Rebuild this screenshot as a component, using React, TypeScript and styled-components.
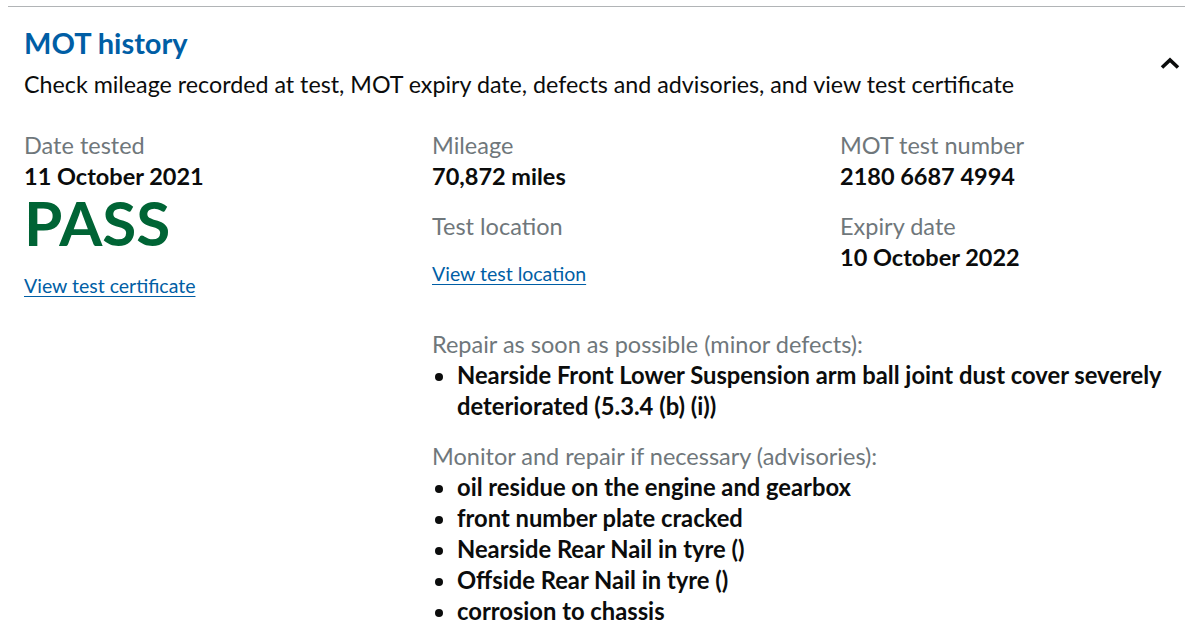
import React from 'react'
import styled, { createGlobalStyle } from 'styled-components'

const FONT = `Lato, "Noto Sans", Arial, sans-serif`

const GlobalStyle = createGlobalStyle`
  body {
    margin: 0;
    background: #ffffff;
    font-family: ${FONT};
    color: #0b0c0c;
    overflow: hidden;
  }
`

const Page = styled.div`
  padding: 6px 0 0 8px;
`

const Section = styled.section`
  border-top: 1px solid #b1b4b6;
  padding: 0 5px 0 16px;
`

const Header = styled.div`
  display: flex;
  align-items: center;
  justify-content: space-between;
  padding-top: 18px;
`

const Heading = styled.h2`
  margin: 0 0 8px;
  font-size: 29px;
  line-height: 36px;
  font-weight: 700;
  color: #005ea5;
`

const Summary = styled.p`
  margin: 0;
  font-size: 23.25px;
  line-height: 31px;
`

const Chevron = styled.svg`
  width: 20px;
  height: 14px;
`

const Body = styled.div`
  display: flex;
  margin-top: 30px;
`

const LeftColumn = styled.div`
  width: 408px;
  flex: none;
`

const RightColumn = styled.div`
  flex: 1;
`

const FieldGrid = styled.div`
  display: grid;
  grid-template-columns: 408px 1fr;
`

const Field = styled.div<{ $last?: boolean }>`
  margin-bottom: ${p => (p.$last ? 0 : 19)}px;
`

const Label = styled.div`
  font-size: 23.5px;
  line-height: 31px;
  color: #6f777b;
`

const Value = styled.div`
  font-size: 23.5px;
  line-height: 31px;
  font-weight: 700;
`

const Result = styled.div`
  font-size: 62px;
  line-height: 60px;
  font-weight: 700;
  color: #006435;
`

const Link = styled.a<{ $gap: number }>`
  display: block;
  width: max-content;
  margin-top: ${p => p.$gap}px;
  font-size: 19.5px;
  line-height: 25px;
  color: #005ea5;
  text-decoration: underline;
  text-underline-offset: 3px;
`

const Defects = styled.div`
  margin-top: 43px;
`

const DefectGroup = styled.div`
  & + & {
    margin-top: 19px;
  }
`

const List = styled.ul`
  margin: 0;
  padding-left: 25px;
  list-style: disc;
`

const Item = styled.li`
  font-size: 23.75px;
  line-height: 31px;
  font-weight: 700;
`

const minor = ['Nearside Front Lower Suspension arm ball joint dust cover severely deteriorated (5.3.4 (b) (i))']

const advisories = [
  'oil residue on the engine and gearbox',
  'front number plate cracked',
  'Nearside Rear Nail in tyre ()',
  'Offside Rear Nail in tyre ()',
  'corrosion to chassis',
]

export default function App() {
  return (
    <>
      <GlobalStyle />
      <Page>
        <Section>
          <Header>
            <div>
              <Heading>MOT history</Heading>
              <Summary>
                Check mileage recorded at test, MOT expiry date, defects and advisories, and view test certificate
              </Summary>
            </div>
            <Chevron viewBox="0 0 20 14" aria-hidden="true">
              <path d="M2 11.5 L10 4 L18 11.5" fill="none" stroke="#0b0c0c" strokeWidth="3.6" />
            </Chevron>
          </Header>

          <Body>
            <LeftColumn>
              <Label>Date tested</Label>
              <Value>11 October 2021</Value>
              <Result>PASS</Result>
              <Link href="#" $gap={21}>View test certificate</Link>
            </LeftColumn>

            <RightColumn>
              <FieldGrid>
                <div>
                  <Field>
                    <Label>Mileage</Label>
                    <Value>70,872 miles</Value>
                  </Field>
                  <Field $last>
                    <Label>Test location</Label>
                    <Link href="#" $gap={19}>View test location</Link>
                  </Field>
                </div>
                <div>
                  <Field>
                    <Label>MOT test number</Label>
                    <Value>2180 6687 4994</Value>
                  </Field>
                  <Field $last>
                    <Label>Expiry date</Label>
                    <Value>10 October 2022</Value>
                  </Field>
                </div>
              </FieldGrid>

              <Defects>
                <DefectGroup>
                  <Label>Repair as soon as possible (minor defects):</Label>
                  <List>
                    {minor.map(text => (
                      <Item key={text}>{text}</Item>
                    ))}
                  </List>
                </DefectGroup>
                <DefectGroup>
                  <Label>Monitor and repair if necessary (advisories):</Label>
                  <List>
                    {advisories.map(text => (
                      <Item key={text}>{text}</Item>
                    ))}
                  </List>
                </DefectGroup>
              </Defects>
            </RightColumn>
          </Body>
        </Section>
      </Page>
    </>
  )
}
